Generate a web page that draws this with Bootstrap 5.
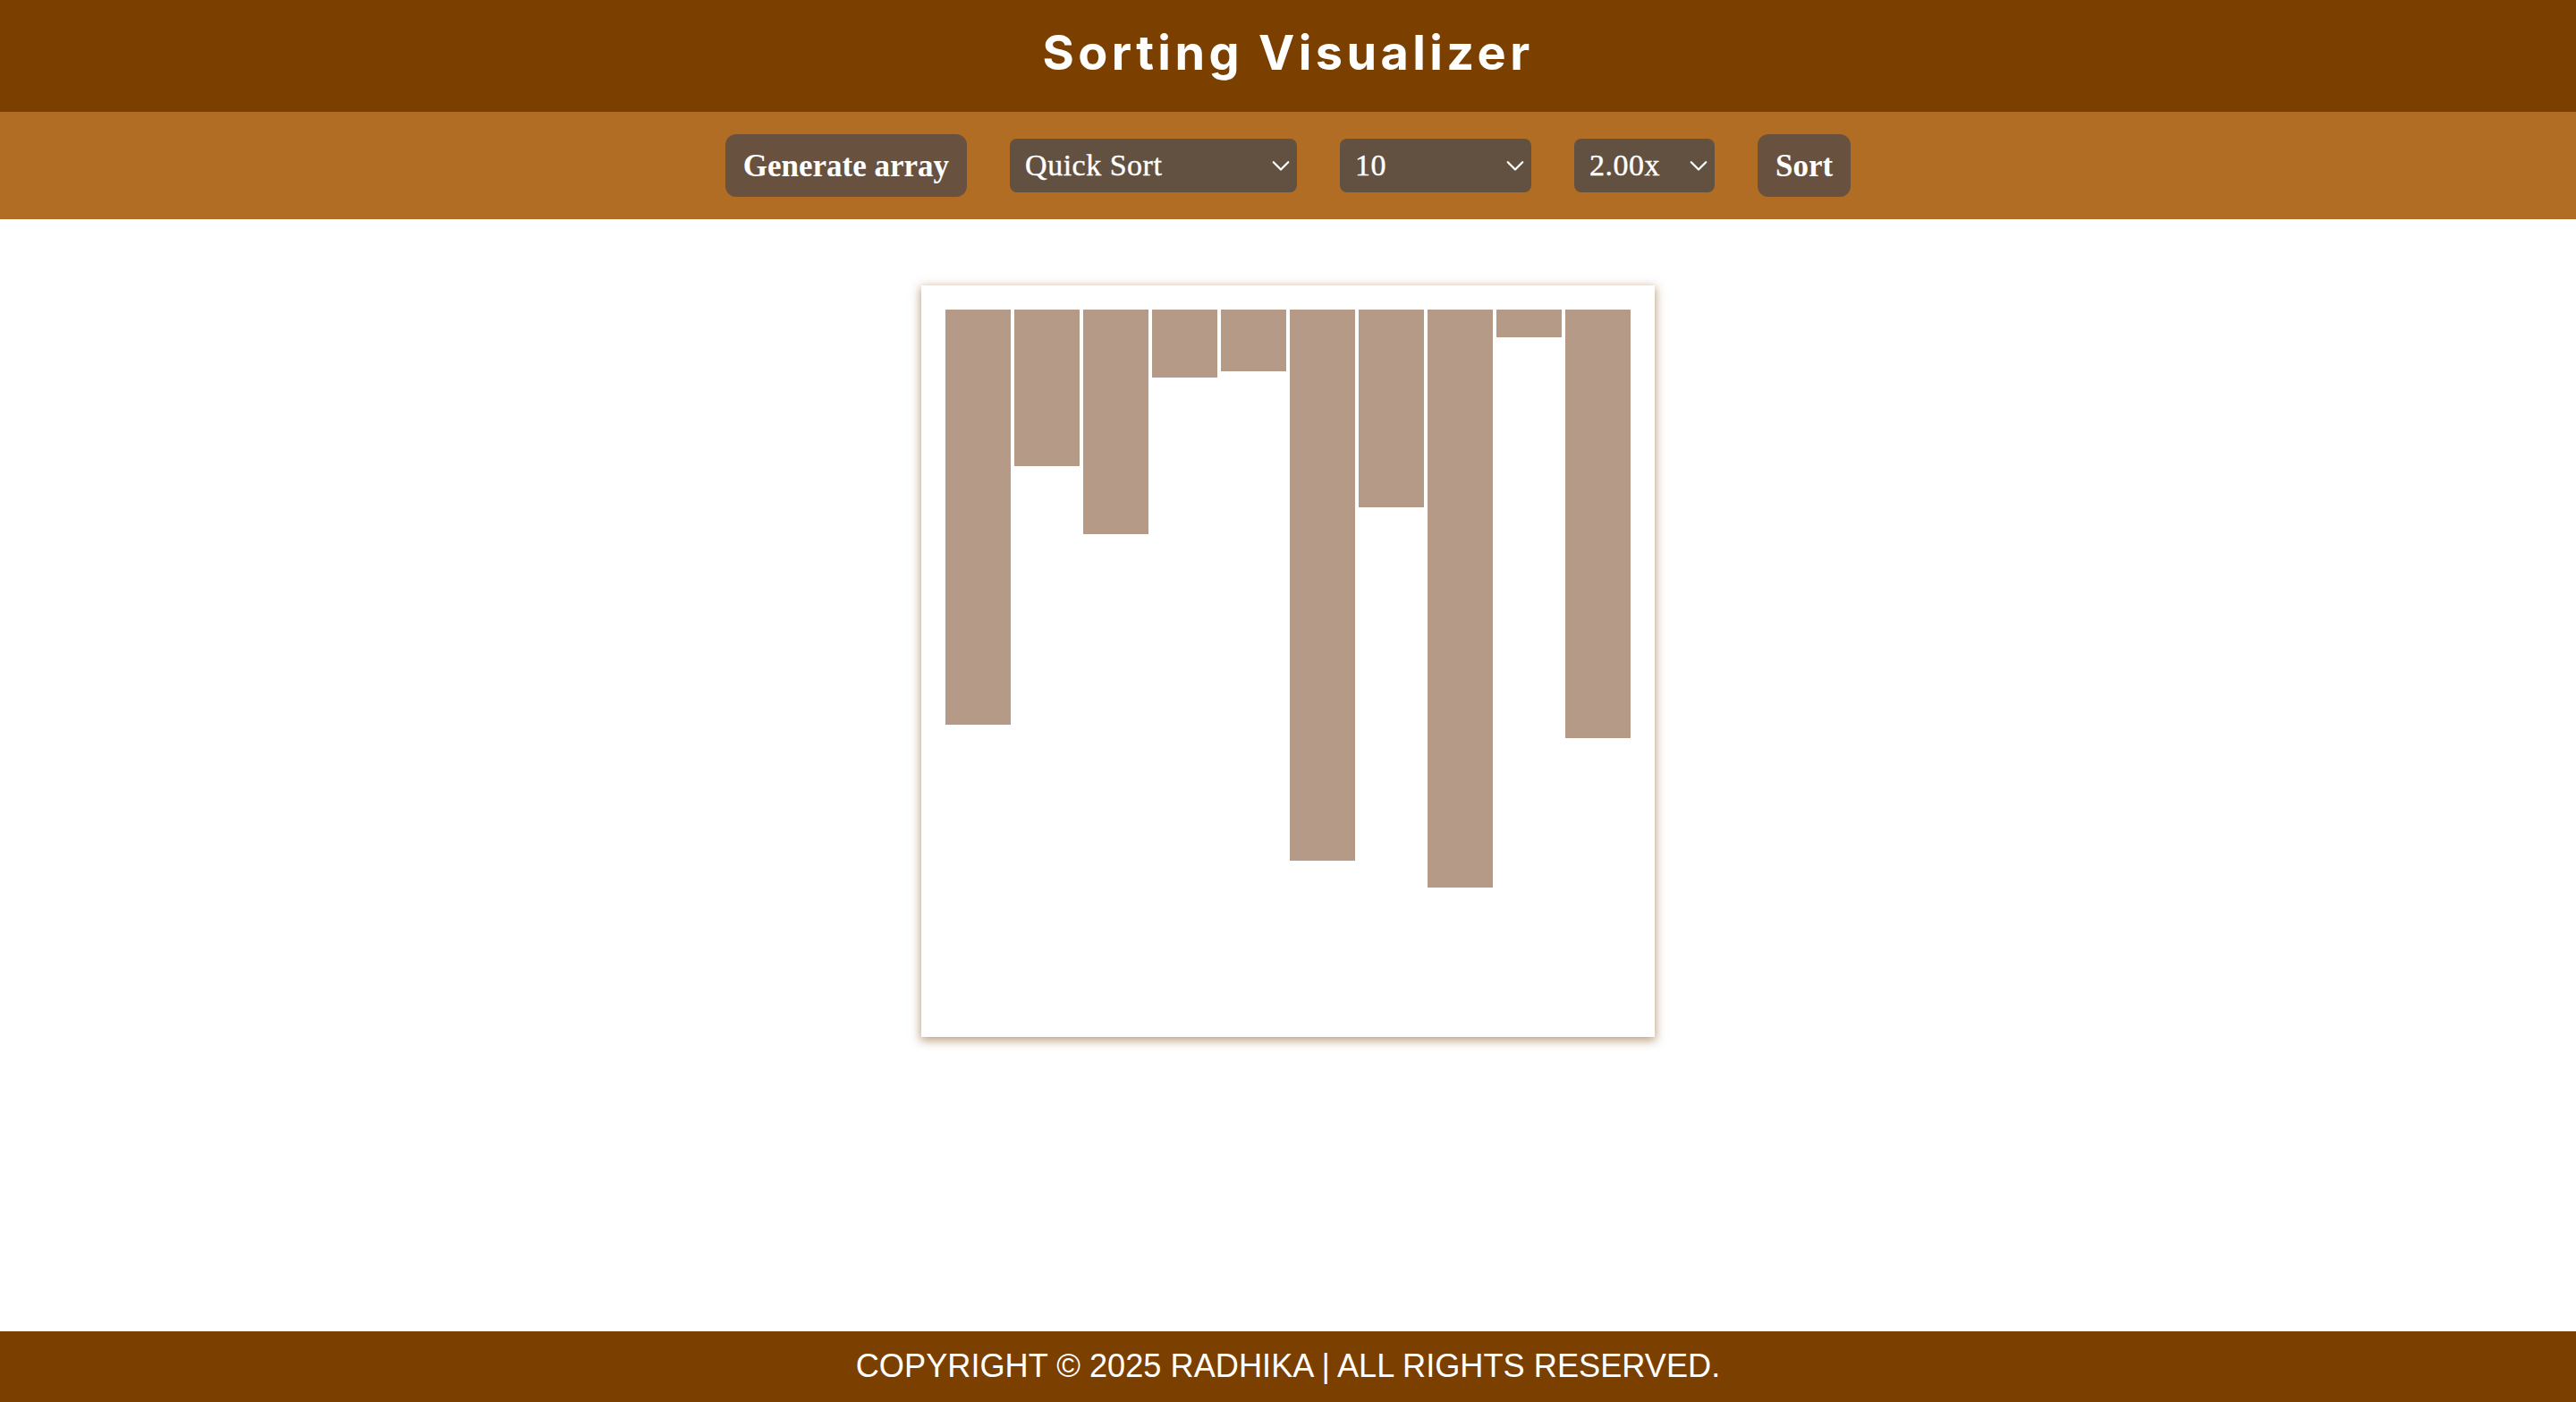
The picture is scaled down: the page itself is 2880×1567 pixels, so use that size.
<!doctype html>
<html lang="en">
<head>
<meta charset="utf-8">
<title>Sorting Visualizer</title>
<link href="https://cdn.jsdelivr.net/npm/bootstrap@5.3.0/dist/css/bootstrap.min.css" rel="stylesheet">
<style>
html,body{height:100%}
body{background:#fff;font-family:"Liberation Sans",Arial,sans-serif}
.page-wrap{height:1567px}
.top-title{height:125px;background:#7b3f00;padding-bottom:7px}
.top-title h1{font-family:Inter,sans-serif;font-weight:700;font-size:54px;line-height:1.2;color:#fff;margin:0;letter-spacing:4.4px}
.tool-bar{height:120px;background:#b26d24;gap:48px}
.act-btn{height:70px;padding:0 20px;border:0;border-radius:12px;background:#695140;color:#fff;font-family:"Liberation Serif",serif;font-weight:700;font-size:35px;line-height:1}
.act-btn:hover{background:#695140;color:#fff}
.pick{height:60px;padding:0 40px 0 17px;border:0;border-radius:8px;background-color:#625040;color:#fff;font-family:"Liberation Serif",serif;font-size:34px;line-height:1;letter-spacing:.5px;-webkit-text-stroke:.4px #fff;background-position:right 6px center;background-size:24px 24px;background-image:url("data:image/svg+xml,%3csvg xmlns='http://www.w3.org/2000/svg' viewBox='0 0 16 16'%3e%3cpath fill='none' stroke='%23fff' stroke-linecap='round' stroke-linejoin='round' stroke-width='1.5' d='M2.5 5.5L8 11l5.5-5.5'/%3e%3c/svg%3e")}
.pick-a{width:321px}.pick-b{width:214px}.pick-c{width:157px}
.stage{width:820px;height:840px;margin-top:74px;padding:27px;box-shadow:0 3px 10px 1px rgba(123,63,0,.5);gap:4px}
.stick{width:73px;background:#b49a87}
.bottom-bar{height:79px;background:#7b3f00;color:#fff;font-size:36.2px}
</style>
</head>
<body>
<div class="page-wrap d-flex flex-column">
  <header class="top-title d-flex align-items-center justify-content-center"><h1>Sorting Visualizer</h1></header>
  <nav class="tool-bar d-flex align-items-center justify-content-center">
    <button class="btn act-btn" type="button">Generate array</button>
    <select class="form-select pick pick-a"><option>Quick Sort</option><option>Merge Sort</option><option>Bubble Sort</option></select>
    <select class="form-select pick pick-b"><option>10</option><option>20</option></select>
    <select class="form-select pick pick-c"><option>2.00x</option><option>1.00x</option></select>
    <button class="btn act-btn" type="button">Sort</button>
  </nav>
  <main class="flex-grow-1">
    <div class="stage mx-auto d-flex align-items-start bg-white">
      <div class="stick" style="height:464px"></div>
      <div class="stick" style="height:175px"></div>
      <div class="stick" style="height:251px"></div>
      <div class="stick" style="height:76px"></div>
      <div class="stick" style="height:69px"></div>
      <div class="stick" style="height:616px"></div>
      <div class="stick" style="height:221px"></div>
      <div class="stick" style="height:646px"></div>
      <div class="stick" style="height:31px"></div>
      <div class="stick" style="height:479px"></div>
    </div>
  </main>
  <footer class="bottom-bar d-flex align-items-center justify-content-center">COPYRIGHT © 2025 RADHIKA | ALL RIGHTS RESERVED.</footer>
</div>
<script src="https://cdn.jsdelivr.net/npm/bootstrap@5.3.0/dist/js/bootstrap.bundle.min.js"></script>
</body>
</html>
